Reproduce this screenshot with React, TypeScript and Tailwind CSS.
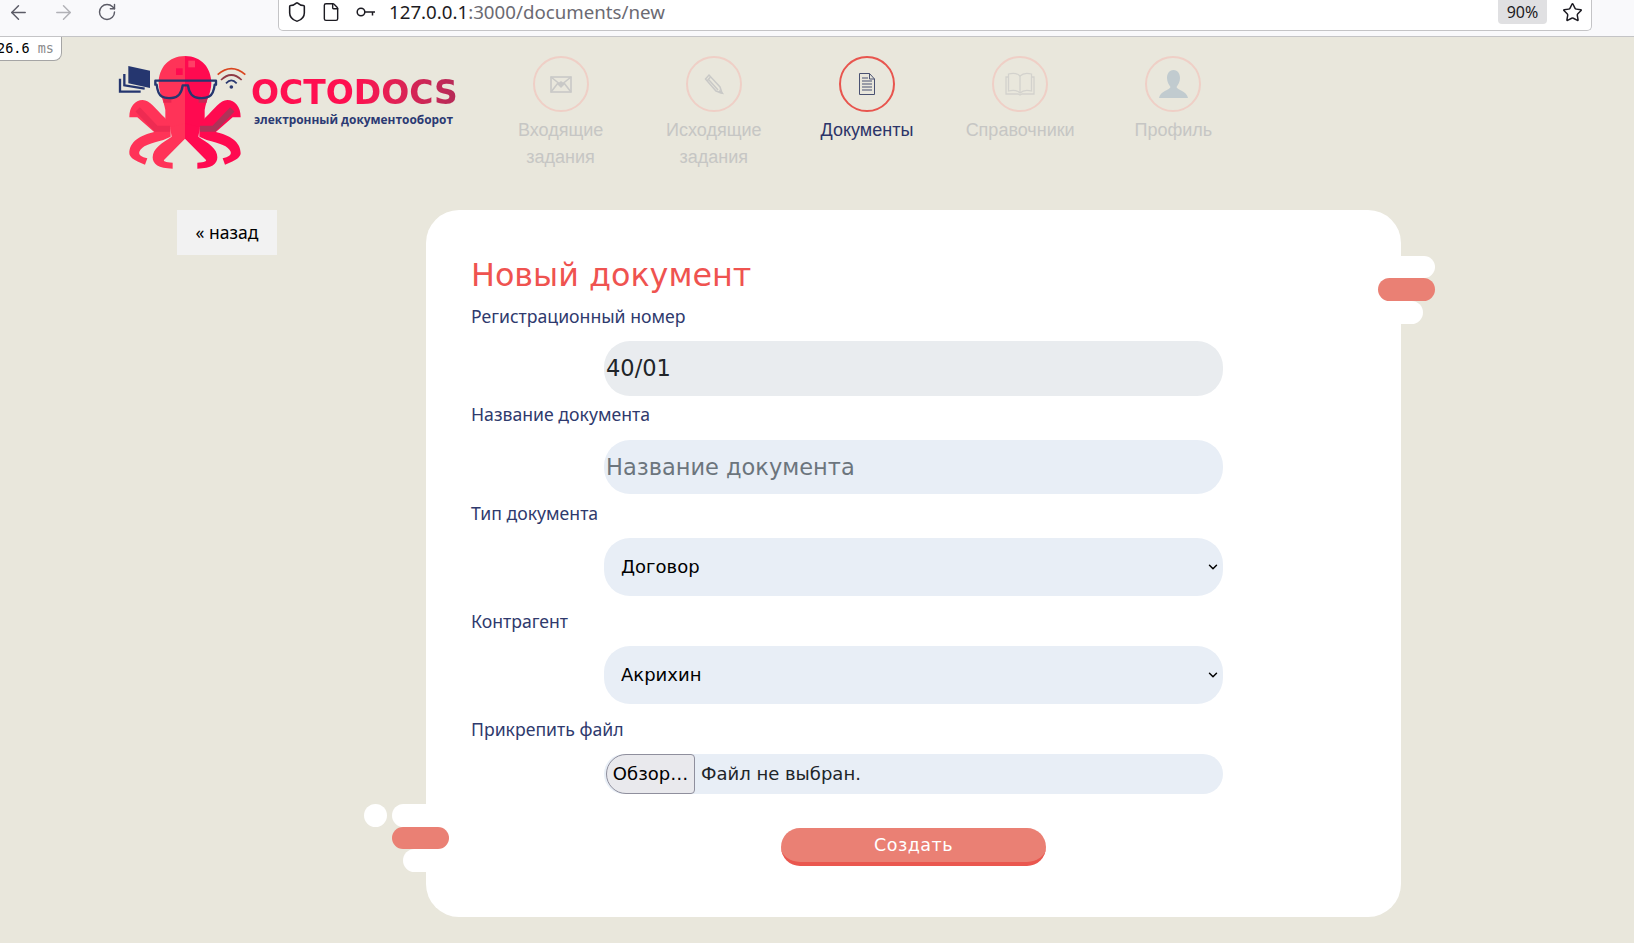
import React from 'react';
import { ArrowLeft, ArrowRight, RotateCw, Shield, File, Star, ChevronDown } from 'lucide-react';

// one side of the octopus, mirrored for the right half
const OctoHalf: React.FC<{ color: string; strip: string; shade: string }> = ({ color, strip, shade }) => (
  <g>
    <path d="M255 48 C205 48 176 85 176 128 C176 160 192 180 196 210 L196 262 L255 262 Z" fill={color} />
    <path d="M88 232 C88 200 105 180 128 180 C150 180 165 205 196 235 L210 262 L165 278 L112 232 Z" fill={color} />
    <path d="M212 262 L165 275 C120 285 88 305 88 340 C88 350 100 362 135 374 L142 355 C125 350 115 345 118 335 C125 318 150 310 190 300 L212 290 Z" fill={color} />
    <path d="M255 250 L210 262 L215 290 C185 310 158 325 158 352 C158 372 175 386 218 386 L218 368 C195 368 190 362 192 360 L255 296 Z" fill={color} />
    <path d="M113 208 L168 266 L210 266" fill="none" stroke={strip} strokeWidth="18" />
    <rect x="190" y="176" width="24" height="12" fill={shade} />
  </g>
);

const Logo = () => (
  <svg width="150" height="140" viewBox="0 0 450 420">
    <OctoHalf color="#ff3358" strip="#ee2b52" shade="#e8264f" />
    <g transform="translate(510,0) scale(-1,1)">
      <OctoHalf color="#ff0a50" strip="#ae3358" shade="#c22a55" />
    </g>
    <rect x="228" y="85" width="20" height="20" fill="#ff0a50" />
    <rect x="265" y="62" width="20" height="20" fill="#ff3f66" />
    {/* glasses */}
    <path d="M166 122 H348 V134 L344 134 C340 174 320 176 296 174 C272 172 266 152 264 136 H248 C246 152 240 172 216 174 C192 176 174 174 170 134 L166 134 Z" fill="none" stroke="#25366f" strokeWidth="7" strokeLinejoin="round" />
    {/* documents */}
    <path d="M85 78 L150 92 V144 L85 130 Z" fill="#25366f" />
    <path d="M73 102 V136 L134 146" fill="none" stroke="#25366f" strokeWidth="7" />
    <path d="M60 116 V155 L122 155" fill="none" stroke="#25366f" strokeWidth="7" />
    {/* wifi */}
    <path d="M353 104 Q394 68 436 104" fill="none" stroke="#d9451f" strokeWidth="5" />
    <path d="M363 120 Q394 90 425 120" fill="none" stroke="#8f3a45" strokeWidth="5" />
    <path d="M378 130 Q394 112 410 130" fill="none" stroke="#2b3a70" strokeWidth="5" />
    <circle cx="394" cy="141" r="5.5" fill="#2b3a70" />
  </svg>
);

const MailIcon = () => (
  <svg width="22" height="17" viewBox="0 0 22 17" fill="none" stroke="#c9c9c7" strokeWidth="1.6">
    <rect x="1" y="1" width="20" height="15" />
    <path d="M1 1 L11 9 L21 1 M1 16 L8 7 M21 16 L14 7" />
    <path d="M7 8 L11 12 L15 8 L11 5 Z" fill="#c9c9c7" stroke="none" />
  </svg>
);

const PencilIcon = () => (
  <svg width="20" height="22" viewBox="0 0 20 22" fill="none" stroke="#c9c9c7" strokeWidth="1.5">
    <path d="M1.5 6 L5 2 L16 14 L18 20 L12 18 Z" />
    <path d="M3 8 L6.5 4 M5 7 L14 17" />
    <path d="M16 18 L18 20 L15.5 19.5 Z" fill="#c9c9c7" />
  </svg>
);

const DocIcon = () => (
  <svg width="16" height="22" viewBox="0 0 16 22" fill="none" stroke="#4a5272" strokeWidth="1">
    <path d="M.5 .5 H10.5 L15.5 6 V21.5 H.5 Z" />
    <path d="M10.5 .5 V6 H15.5" />
    <path d="M3 5 H9 M3 8 H13 M3 11 H13 M3 14 H13 M3 17 H13" strokeWidth="1.2" />
  </svg>
);

const BookIcon = () => (
  <svg width="30" height="24" viewBox="0 0 30 24" fill="none" stroke="#d3d2cd" strokeWidth="1.3">
    <path d="M15 4 C12 1 7 1 3.5 2 V19 C7 18 12 18 15 21 C18 18 23 18 26.5 19 V2 C23 1 18 1 15 4 Z" />
    <path d="M15 4 V21 M3.5 5 H1 V22 H13 L15 23 L17 22 H29 V5 H26.5" />
  </svg>
);

const UserIcon = () => (
  <svg width="29" height="28" viewBox="0 0 29 28" fill="#c1cbcf">
    <path d="M14.5 0 C19 0 21 4 21 8 C21 12 19 15 17.5 17 C18 20 28 21 29 28 H0 C1 21 11 20 11.500 17 C10 15 8 12 8 8 C8 4 10 0 14.5 0 Z" />
  </svg>
);

const navItems = [
  { icon: <MailIcon />, lines: ['Входящие', 'задания'] },
  { icon: <PencilIcon />, lines: ['Исходящие', 'задания'] },
  { icon: <DocIcon />, lines: ['Документы'], active: true },
  { icon: <BookIcon />, lines: ['Справочники'] },
  { icon: <UserIcon />, lines: ['Профиль'] },
];

const Label: React.FC<{ children: React.ReactNode; className?: string }> = ({ children, className }) => (
  <label className={`block h-[22px] leading-[20px] text-[17.65px] text-[#2f3a6d] font-['Noto_Sans',sans-serif] ${className}`}>
    {children}
  </label>
);

const Select: React.FC<{ value: string }> = ({ value }) => (
  <div className="relative ml-[133px] w-[619px]">
    <select
      defaultValue={value}
      className="block h-[58px] w-full appearance-none rounded-[26px] bg-[#e8eef6] pb-[2px] pl-[17px] text-[18px] text-black font-['DejaVu_Sans',sans-serif] outline-none"
    >
      <option>{value}</option>
    </select>
    <ChevronDown className="absolute right-[3px] top-[22px] h-[14px] w-[14px] text-black" strokeWidth={2.5} />
  </div>
);

export default function App() {
  return (
    <div className="min-h-screen overflow-hidden bg-[#e9e7dc]">
      {/* browser toolbar */}
      <div className="flex h-[37px] items-start border-b border-[#c4c4c6] bg-[#f9f9fb]">
        <div className="flex h-[24px] w-[278px] items-center pl-[7px] text-[#5b5b66]">
          <ArrowLeft className="h-[23px] w-[23px]" strokeWidth={1.5} />
          <ArrowRight className="ml-[22px] h-[23px] w-[23px] text-[#b1b1b6]" strokeWidth={1.5} />
          <RotateCw className="ml-[22px] h-[20px] w-[20px]" strokeWidth={1.7} />
        </div>
        <div className="flex h-[31px] w-[1314px] items-start rounded-b-[5px] border border-t-0 border-[#c4c4c6] bg-white pb-[6px]">
          <div className="flex h-[24px] flex-1 items-center pl-[7px] text-[#1c1b22]">
            <Shield className="h-[22px] w-[22px]" strokeWidth={1.7} />
            <File className="ml-[13px] h-[20px] w-[20px]" strokeWidth={1.7} />
            <svg className="ml-[15px]" width="20" height="10" viewBox="0 0 20 10" fill="none" stroke="currentColor" strokeWidth="1.5">
              <circle cx="5" cy="5" r="3.8" />
              <path d="M9 5 H19 M16.500 5 V8.500" />
            </svg>
            <span className="ml-[13px] text-[18.7px] font-['Noto_Sans',sans-serif] text-[#1c1b22]">
              127.0.0.1<span className="text-[#6b6a72]">:3000/documents/new</span>
            </span>
          </div>
          <span className="flex h-[24px] w-[49px] items-center justify-center rounded-b-[4px] bg-[#e0e0e2] text-[16px] text-[#1c1b22] font-['Noto_Sans',sans-serif]">
            90%
          </span>
          <div className="ml-[6px] flex h-[24px] w-[38px] items-center justify-center text-[#1c1b22]">
            <Star className="h-[21px] w-[21px]" strokeWidth={1.7} />
          </div>
        </div>
      </div>

      {/* timing tag */}
      <div className="absolute left-0 top-[37px] flex h-[24px] w-[62px] items-center overflow-hidden rounded-br-[8px] border-b border-r border-[#a5a5a5] bg-white text-[13.5px] font-['DejaVu_Sans_Mono',monospace] text-black">
        <span className="ml-[-3px] whitespace-nowrap">
          26.6 <span className="text-[#8a8a8a]">ms</span>
        </span>
      </div>

      {/* header */}
      <header className="flex h-[173px] items-start pl-[100px] pt-[3px]">
        <div className="flex w-[384px] items-start">
          <Logo />
          <div className="ml-px mt-[33px]">
            <div className="bg-gradient-to-r from-[#ff0f50] via-[#ff0f50] to-[#b52a58] bg-clip-text text-[33px] font-bold leading-[40px] text-transparent font-['DejaVu_Sans',sans-serif]">
              OCTODOCS
            </div>
            <div className="ml-[3px] mt-[-2px] text-[11.9px] font-bold leading-[16px] text-[#2b3a73] font-['Open_Sans',sans-serif]">
              электронный документооборот
            </div>
          </div>
        </div>
        <nav className="mt-[16px] flex">
          {navItems.map((item) => (
            <a key={item.lines[0]} className="flex w-[153.2px] flex-col items-center">
              <span
                className={`flex h-[56px] w-[56px] items-center justify-center rounded-full border-2 ${
                  item.active ? 'border-[#e8554e]' : 'border-[#efcfc6]'
                }`}
              >
                {item.icon}
              </span>
              <span
                className={`mt-[5px] text-center text-[18px] leading-[27px] font-['Liberation_Sans',sans-serif] ${
                  item.active ? 'text-[#2d3569]' : 'text-[#c6c6c4]'
                }`}
              >
                {item.lines.map((line) => (
                  <span key={line} className="block">
                    {line}
                  </span>
                ))}
              </span>
            </a>
          ))}
        </nav>
      </header>

      {/* content */}
      <main className="flex items-start pb-[26px] pl-[177px]">
        <a className="flex h-[45px] w-[100px] items-center justify-center bg-[#f2f2f2] text-[17.5px] text-black font-['Noto_Sans',sans-serif]">
          « назад
        </a>
        <section className="relative ml-[149px] h-[707px] w-[975px] rounded-[33px] bg-white pl-[45px] pt-[40px]">
          <span className="absolute right-[-34px] top-[46px] h-[22px] w-[60px] rounded-full bg-white" />
          <span className="absolute right-[-34px] top-[68px] h-[23px] w-[57px] rounded-full bg-[#ea8074]" />
          <span className="absolute right-[-22px] top-[91px] h-[23px] w-[50px] rounded-full bg-white" />
          <span className="absolute left-[-62px] top-[594px] h-[23px] w-[23px] rounded-full bg-white" />
          <span className="absolute left-[-34px] top-[594px] h-[23px] w-[60px] rounded-full bg-white" />
          <span className="absolute left-[-34px] top-[617px] h-[22px] w-[57px] rounded-full bg-[#ea8074]" />
          <span className="absolute left-[-23px] top-[639px] h-[23px] w-[50px] rounded-full bg-white" />

          <h1 className="h-[50px] text-[31.8px] leading-[50px] text-[#ef5350] font-['DejaVu_Sans',sans-serif]">
            Новый документ
          </h1>
          <Label className="mt-[6px]">Регистрационный номер</Label>
          <input
            disabled
            value="40/01"
            className="ml-[133px] mt-[13px] block h-[55px] w-[619px] rounded-[26px] bg-[#e9ecef] pb-[2px] pl-[2px] text-[22.5px] text-[#212529] font-['DejaVu_Sans',sans-serif] outline-none"
          />
          <Label className="mt-[8px]">Название документа</Label>
          <input
            placeholder="Название документа"
            className="ml-[133px] mt-[14px] block h-[54px] w-[619px] rounded-[26px] bg-[#e8eef6] pl-[2px] text-[22.5px] text-[#212529] placeholder:text-[#6c757d] font-['DejaVu_Sans',sans-serif] outline-none"
          />
          <Label className="mt-[9px]">Тип документа</Label>
          <div className="mt-[13px]">
            <Select value="Договор" />
          </div>
          <Label className="mt-[15px]">Контрагент</Label>
          <div className="mt-[13px]">
            <Select value="Акрихин" />
          </div>
          <Label className="mt-[15px]">Прикрепить файл</Label>
          <div className="ml-[133px] mt-[13px] flex h-[40px] w-[619px] items-center rounded-[20px] bg-[#e8eef6] pl-[2px] text-[18px] font-['DejaVu_Sans',sans-serif]">
            <button className="h-[40px] w-[89px] rounded-l-[20px] rounded-r-[4px] border border-[#8f8f9d] bg-[#e9e9ed] pb-[2px] text-black">
              Обзор…
            </button>
            <span className="ml-[6px] pb-[2px] text-[#212529]">Файл не выбран.</span>
          </div>
          <button className="ml-[310px] mt-[34px] block h-[38px] w-[265px] rounded-full border-b-4 border-[#ea574f] bg-[#ea8074] text-[17.5px] tracking-[0.5px] text-white font-['DejaVu_Sans',sans-serif]">
            Создать
          </button>
        </section>
      </main>
    </div>
  );
}
